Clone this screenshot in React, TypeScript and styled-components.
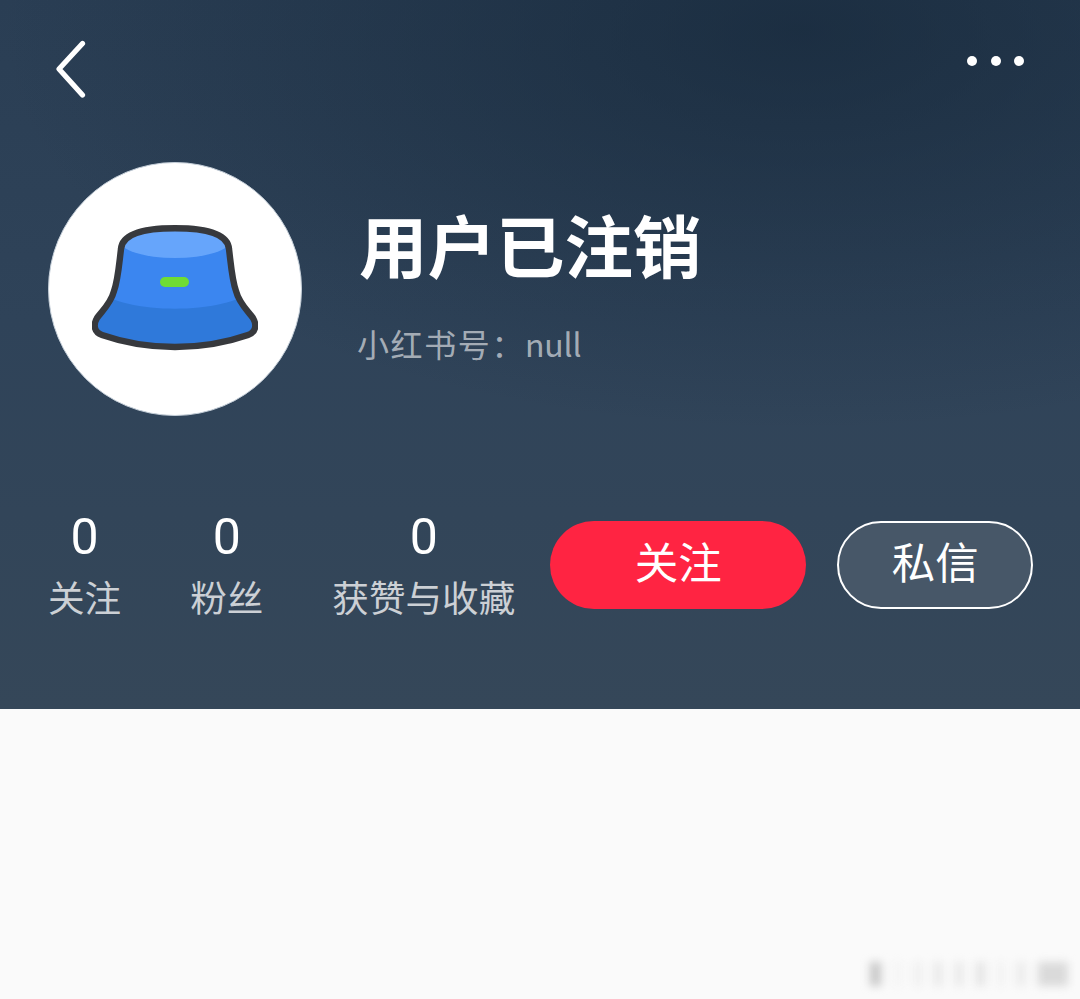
import styled, { createGlobalStyle } from "styled-components";

const GlobalStyle = createGlobalStyle`
    html, body {
        margin: 0;
        padding: 0;
        background: #fafafa;
    }
    body {
        font-family: "Noto Sans CJK SC", "Noto Sans", sans-serif;
    }
`;

const Page = styled.div`
    position: relative;
    width: 1080px;
    height: 999px;
    overflow: hidden;
    background: #fafafa;
`;

const Header = styled.header`
    box-sizing: border-box;
    height: 709px;
    padding: 40px 48px 0;
    color: #fff;
    background:
        radial-gradient(ellipse 800px 400px at 800px 30px, rgba(20, 38, 56, 0.66), rgba(20, 38, 56, 0) 100%),
        linear-gradient(180deg, #2a3e54 0%, #2f4359 45%, #354759 100%);
`;

const TopBar = styled.div`
    display: flex;
    align-items: flex-start;
    justify-content: space-between;
    height: 58px;
`;

const BackIcon = styled.svg`
    display: block;
    width: 40px;
    height: 58px;
    margin-left: 4px;
`;

const Dots = styled.div`
    display: flex;
    gap: 13.5px;
    margin: 16px 8px 0 0;
`;

const Dot = styled.span`
    width: 10px;
    height: 10px;
    border-radius: 50%;
    background: #fff;
`;

const Profile = styled.section`
    display: flex;
    align-items: flex-start;
    gap: 57px;
    margin-top: 64px;
`;

const Avatar = styled.div`
    box-sizing: border-box;
    display: flex;
    align-items: center;
    justify-content: center;
    width: 254px;
    height: 254px;
    flex-shrink: 0;
    border-radius: 50%;
    background: #fff;
    border: 1px solid #c4ced8;
`;

const HatIcon = styled.svg`
    display: block;
    width: 166px;
    height: 126px;
    margin-top: -2px;
`;

const Info = styled.div`
    display: flex;
    flex-direction: column;
    padding-top: 33px;
`;

const Name = styled.h1`
    margin: 0;
    font-size: 68.5px;
    line-height: 98px;
    font-weight: 700;
    color: #fff;
`;

const RedId = styled.div`
    margin: 26px 0 0 -2px;
    font-size: 32px;
    line-height: 48px;
    letter-spacing: 1.6px;
    color: rgba(255, 255, 255, 0.58);
`;

const RedIdValue = styled.span`
    letter-spacing: -0.2px;
`;

const Bottom = styled.section`
    display: flex;
    align-items: flex-start;
    margin-top: 91px;
`;

const Stats = styled.div`
    display: flex;
    flex-shrink: 0;
    gap: 69px;
`;

const Stat = styled.div`
    display: flex;
    flex-direction: column;
    align-items: center;
`;

const StatValue = styled.div`
    font-family: "Roboto", "Noto Sans", sans-serif;
    font-size: 50px;
    line-height: 60px;
    color: #fff;
`;

const StatLabel = styled.div`
    font-size: 36.6px;
    line-height: 52px;
    margin-top: 4px;
    white-space: nowrap;
    color: rgba(255, 255, 255, 0.75);
`;

const Actions = styled.div`
    display: flex;
    gap: 31px;
    margin: 14px 0 0 35px;
`;

const ActionButton = styled.button<{ $primary?: boolean }>`
    box-sizing: border-box;
    width: ${(props) => (props.$primary ? "256px" : "196px")};
    height: 88px;
    padding: 0 0 9px;
    border-radius: 44px;
    border: ${(props) => (props.$primary ? "none" : "2px solid #fff")};
    background: ${(props) => (props.$primary ? "#ff2442" : "#475768")};
    color: #fff;
    font-family: inherit;
    font-size: 43.5px;
    line-height: 62px;
`;

const Watermark = styled.div`
    position: absolute;
    right: 12px;
    bottom: 13px;
    display: flex;
    align-items: stretch;
    gap: 13px;
    height: 24px;
    filter: blur(4px);
`;

const WatermarkBar = styled.span<{ $width: number; $tone: number }>`
    width: ${(props) => props.$width}px;
    background: rgb(${(props) => props.$tone}, ${(props) => props.$tone}, ${(props) => props.$tone});
`;

const stats = [
    { value: "0", label: "关注" },
    { value: "0", label: "粉丝" },
    { value: "0", label: "获赞与收藏" },
];

const watermark = [
    { width: 11, tone: 200 },
    { width: 8, tone: 245 },
    { width: 6, tone: 236 },
    { width: 8, tone: 232 },
    { width: 8, tone: 232 },
    { width: 9, tone: 228 },
    { width: 6, tone: 240 },
    { width: 8, tone: 234 },
    { width: 30, tone: 218 },
];

const hatOutline =
    "M29 24C30 11 45 3.3 83 3.3C121 3.3 136 11 137 24C139 40 140 55 144 66C147 78 155 85 161 93C165 100 164 107 156 110C136 117 110 122 83 122C56 122 30 117 10 110C2 107 1 100 5 93C11 85 19 78 22 66C26 55 27 40 29 24Z";

const App = () => {
    return (
        <Page>
            <GlobalStyle />
            <Header>
                <TopBar>
                    <BackIcon viewBox="0 0 40 58" fill="none">
                        <path
                            d="M30.5 3.5L7 29L30.5 55"
                            stroke="#fff"
                            strokeWidth="5.2"
                            strokeLinecap="round"
                            strokeLinejoin="round"
                        />
                    </BackIcon>
                    <Dots>
                        <Dot />
                        <Dot />
                        <Dot />
                    </Dots>
                </TopBar>
                <Profile>
                    <Avatar>
                        <HatIcon viewBox="0 0 166 126">
                            <defs>
                                <clipPath id="hat-clip">
                                    <path d={hatOutline} />
                                </clipPath>
                            </defs>
                            <path d={hatOutline} fill="#3b86f0" />
                            <g clipPath="url(#hat-clip)">
                                <path d="M0 62C30 91 136 91 166 62V126H0Z" fill="#2f79da" />
                                <ellipse cx="83" cy="15" rx="56" ry="18" fill="#66a5fb" />
                            </g>
                            <path d={hatOutline} fill="none" stroke="#37393d" strokeWidth="6.4" />
                            <rect x="68" y="52" width="29" height="10" rx="5" fill="#6fdc35" />
                        </HatIcon>
                    </Avatar>
                    <Info>
                        <Name>用户已注销</Name>
                        <RedId>
                            小红书号：<RedIdValue>null</RedIdValue>
                        </RedId>
                    </Info>
                </Profile>
                <Bottom>
                    <Stats>
                        {stats.map((stat) => (
                            <Stat key={stat.label}>
                                <StatValue>{stat.value}</StatValue>
                                <StatLabel>{stat.label}</StatLabel>
                            </Stat>
                        ))}
                    </Stats>
                    <Actions>
                        <ActionButton $primary>关注</ActionButton>
                        <ActionButton>私信</ActionButton>
                    </Actions>
                </Bottom>
            </Header>
            <Watermark>
                {watermark.map((bar, index) => (
                    <WatermarkBar key={index} $width={bar.width} $tone={bar.tone} />
                ))}
            </Watermark>
        </Page>
    );
};

export default App;
